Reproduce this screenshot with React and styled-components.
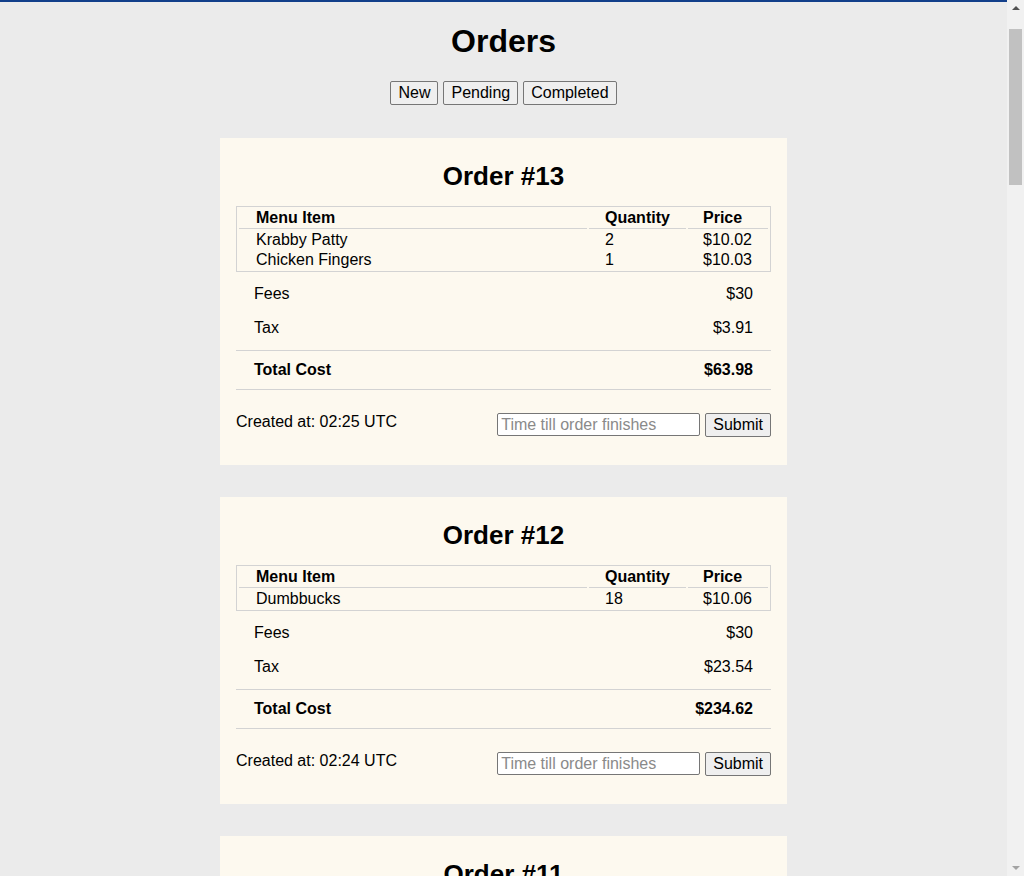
import React from 'react'
import styled, { createGlobalStyle } from 'styled-components'

const GlobalStyle = createGlobalStyle`
  html, body {
    margin: 0;
    padding: 0;
  }
  body {
    background: #ebebeb;
    border-top: 2px solid #123f8a;
    padding-right: 17px;
    font-family: "Liberation Sans", Arial, sans-serif;
    color: #000;
  }
`

// drawn stand-in for the browser's vertical scrollbar
const ScrollTrack = styled.div`
  position: fixed;
  top: 0;
  right: 0;
  bottom: 0;
  width: 17px;
  background: #f1f1f1;
  display: flex;
  flex-direction: column;
  align-items: center;
`

const Arrow = styled.div`
  width: 0;
  height: 0;
  border-left: 4px solid transparent;
  border-right: 4px solid transparent;
  ${p => (p.$down ? 'border-top' : 'border-bottom')}: 4px solid #a3a3a3;
  margin: ${p => (p.$down ? 'auto 0 6px' : '6px 0 0')};
  ${p => !p.$down && 'border-bottom-color: #505050;'}
`

const Thumb = styled.div`
  width: 13px;
  height: 156px;
  margin-top: 19px;
  background: #c1c1c1;
`

const Page = styled.div`
  display: flex;
  flex-direction: column;
  align-items: center;
  padding-bottom: 40px;
`

const Title = styled.h1`
  font-size: 32px;
  line-height: 37px;
  font-weight: bold;
  margin: 21px 0 21px;
`

const Tabs = styled.div`
  display: flex;
  gap: 5px;
  margin-bottom: 33px;
`

const Button = styled.button`
  font-family: "Liberation Sans", Arial, sans-serif;
  font-size: 16px;
  line-height: 18px;
  padding: 2px 7px;
  background: #efefef;
  border: 1px solid #767676;
  border-radius: 2px;
  color: #000;
  cursor: pointer;
`

const List = styled.div`
  display: flex;
  flex-direction: column;
  gap: 32px;
`

const Card = styled.div`
  width: 535px;
  background: #fdf9ef;
  padding: 24px 16px 28px;
`

const CardTitle = styled.h2`
  font-size: 26px;
  line-height: 28px;
  font-weight: bold;
  text-align: center;
  margin: 0 0 16px;
`

const Table = styled.table`
  width: 100%;
  border: 1px solid #d3d3d3;
  border-spacing: 2px;
  font-size: 16px;
  line-height: 18px;
`

const Th = styled.th`
  text-align: left;
  font-weight: bold;
  padding: 0 0 1px ${p => p.$pad || 16}px;
  border-bottom: 1px solid #d3d3d3;
  width: ${p => p.$w || 'auto'};
`

const Td = styled.td`
  padding: 0 0 0 ${p => p.$pad || 16}px;
`

const Summary = styled.div`
  margin-top: 5px;
`

const Row = styled.div`
  display: flex;
  justify-content: space-between;
  padding: 8px 18px;
  font-size: 16px;
  line-height: 18px;
  font-weight: ${p => (p.$bold ? 'bold' : 'normal')};
`

const TotalRow = styled(Row)`
  margin-top: 5px;
  padding: 10px 18px;
  border-top: 1px solid #d3d3d3;
  border-bottom: 1px solid #d3d3d3;
`

const Footer = styled.div`
  display: flex;
  justify-content: space-between;
  align-items: flex-start;
  margin-top: 23px;
  font-size: 16px;
`

const Created = styled.span`
  line-height: 18px;
`

const Form = styled.form`
  display: flex;
  gap: 5px;
`

const Input = styled.input`
  width: 203px;
  height: 23px;
  box-sizing: border-box;
  font-family: "Liberation Sans", Arial, sans-serif;
  font-size: 16px;
  padding: 1px 3px;
  border: 1px solid #767676;
  border-radius: 2px;
  background: #fff;
  &::placeholder {
    color: #8a8a8a;
  }
`

const orders = [
  {
    id: 13,
    items: [
      { name: 'Krabby Patty', qty: 2, price: '$10.02' },
      { name: 'Chicken Fingers', qty: 1, price: '$10.03' },
    ],
    fees: '$30',
    tax: '$3.91',
    total: '$63.98',
    created: '02:25 UTC',
  },
  {
    id: 12,
    items: [{ name: 'Dumbbucks', qty: 18, price: '$10.06' }],
    fees: '$30',
    tax: '$23.54',
    total: '$234.62',
    created: '02:24 UTC',
  },
  {
    id: 11,
    items: [{ name: 'Krabby Patty', qty: 1, price: '$10.02' }],
    fees: '$30',
    tax: '$3.20',
    total: '$43.22',
    created: '02:20 UTC',
  },
]

const Order = ({ order }) => (
  <Card>
    <CardTitle>Order #{order.id}</CardTitle>
    <Table>
      <thead>
        <tr>
          <Th $pad={17}>Menu Item</Th>
          <Th $w="81px">Quantity</Th>
          <Th $w="65px" $pad={15}>Price</Th>
        </tr>
      </thead>
      <tbody>
        {order.items.map(item => (
          <tr key={item.name}>
            <Td $pad={17}>{item.name}</Td>
            <Td>{item.qty}</Td>
            <Td $pad={15}>{item.price}</Td>
          </tr>
        ))}
      </tbody>
    </Table>
    <Summary>
      <Row>
        <span>Fees</span>
        <span>{order.fees}</span>
      </Row>
      <Row>
        <span>Tax</span>
        <span>{order.tax}</span>
      </Row>
      <TotalRow $bold>
        <span>Total Cost</span>
        <span>{order.total}</span>
      </TotalRow>
    </Summary>
    <Footer>
      <Created>Created at: {order.created}</Created>
      <Form onSubmit={e => e.preventDefault()}>
        <Input placeholder="Time till order finishes" />
        <Button type="submit">Submit</Button>
      </Form>
    </Footer>
  </Card>
)

const App = () => {
  return (
    <>
      <GlobalStyle />
      <Page>
        <Title>Orders</Title>
        <Tabs>
          <Button>New</Button>
          <Button>Pending</Button>
          <Button>Completed</Button>
        </Tabs>
        <List>
          {orders.map(o => (
            <Order key={o.id} order={o} />
          ))}
        </List>
      </Page>
      <ScrollTrack>
        <Arrow />
        <Thumb />
        <Arrow $down />
      </ScrollTrack>
    </>
  )
}

export default App
